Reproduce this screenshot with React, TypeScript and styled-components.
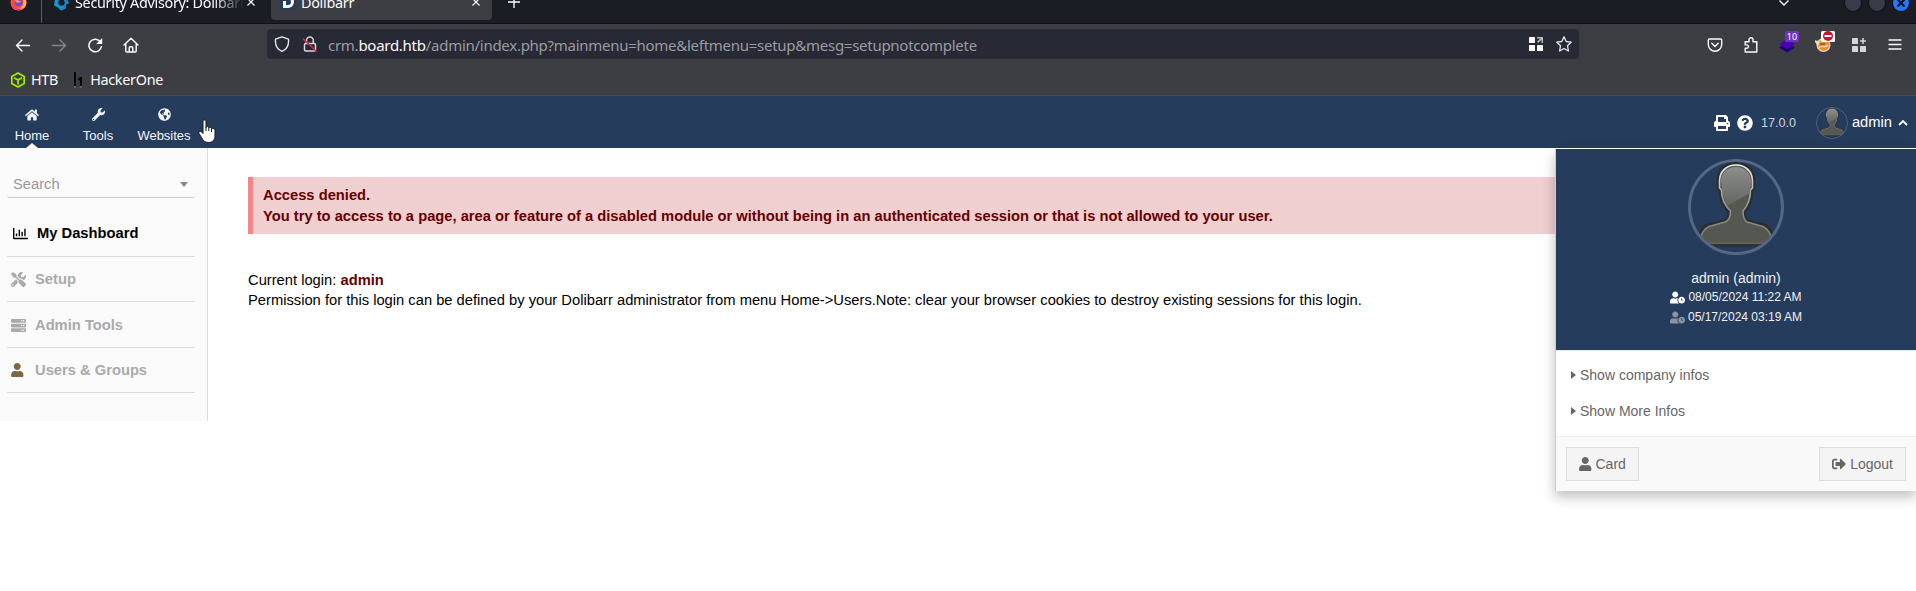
import React from 'react';
import styled, { createGlobalStyle } from 'styled-components';
import {
  FaHome, FaWrench, FaGlobeAmericas, FaPrint, FaQuestionCircle, FaRegChartBar,
  FaTools, FaServer, FaUser, FaUserClock, FaSignOutAlt,
} from 'react-icons/fa';

const Global = createGlobalStyle`
  * { box-sizing: border-box; }
  body { margin: 0; background: #fff; overflow: hidden; font-family: "Liberation Sans", Arial, sans-serif; }
  svg { display: block; flex: none; }
`;

/* ---------- browser chrome ---------- */
const Screen = styled.div`
  width: 1916px;
  height: 591px;
  overflow: hidden;
  background: #fff;
`;
const Chrome = styled.div`
  height: 96px;
  background: #3d3e43;
  border-bottom: 1px solid #4b4c52;
  font-family: "Noto Sans", sans-serif;
  color: #fbfbfe;
`;
const TabStrip = styled.div`
  height: 24px;
  background: #1b1d25;
  border-bottom: 1px solid #101116;
  display: flex;
  align-items: flex-end;
  overflow: hidden;
`;
const PinnedTab = styled.div`
  width: 42px;
  height: 44px;
  flex: none;
  margin-bottom: -1px;
  border-right: 1px solid #5a5b62;
  display: flex;
  align-items: center;
  padding-left: 10px;
`;
const Tab = styled.div<{ $active?: boolean; $width: number }>`
  width: ${p => p.$width}px;
  height: 36px;
  flex: none;
  margin: 0 4px 3px 0;
  padding: 0 12px 0 9px;
  border-radius: 4px;
  background: ${p => (p.$active ? '#3d3e43' : 'transparent')};
  display: flex;
  align-items: center;
`;
const TabTitle = styled.span<{ $fade?: boolean }>`
  flex: 1;
  margin: 1px 0 0 5px;
  font-size: 14.4px;
  letter-spacing: -0.3px;
  line-height: 20px;
  white-space: nowrap;
  overflow: hidden;
  ${p => p.$fade && 'margin-right: 3px; mask-image: linear-gradient(to right, #000 82%, transparent 100%);'}
`;
const StripSpacer = styled.div`flex: 1;`;
const NewTab = styled.div`
  height: 42px;
  display: flex;
  align-items: center;
  margin-left: 12px;
`;
const WindowButtons = styled.div`
  display: flex;
  gap: 8px;
  margin: 0 7px 12px 56px;
`;
const WindowButton = styled.div<{ $close?: boolean }>`
  width: 16px;
  height: 16px;
  border-radius: 50%;
  background: ${p => (p.$close ? '#2777ff' : '#3a3b48')};
  box-shadow: 0 0 0 1px #101116;
  display: flex;
  align-items: center;
  justify-content: center;
`;
const NavBar = styled.div`
  height: 40px;
  display: flex;
  align-items: center;
  padding: 0 13px 0 15px;
`;
const NavButtons = styled.div`
  display: flex;
  align-items: center;
  gap: 20px;
  width: 252px;
  padding-top: 1px;
`;
const UrlBar = styled.div`
  width: 1312px;
  height: 30px;
  background: #272934;
  border-radius: 4px;
  display: flex;
  align-items: center;
  padding: 0 7px;
`;
const Url = styled.div`
  flex: 1;
  margin: 1px 0 0 10px;
  font-size: 15px;
  letter-spacing: -0.27px;
  line-height: 22px;
  color: #9b9ca3;
  white-space: nowrap;
  b { font-weight: 400; color: #fbfbfe; }
`;
const UrlActions = styled.div`
  display: flex;
  align-items: center;
  gap: 12px;
`;
const Extensions = styled.div`
  margin-left: auto;
  display: flex;
  align-items: center;
  gap: 20px;
  padding-top: 1px;
`;
const Extension = styled.div`
  position: relative;
  width: 16px;
  height: 16px;
`;
const CountBadge = styled.span`
  position: absolute;
  left: 6px;
  top: -6px;
  width: 14px;
  height: 11px;
  border-radius: 1.5px;
  background: #6f35bf;
  font-size: 9px;
  line-height: 11px;
  text-align: center;
`;
const BlockBadge = styled.span`
  position: absolute;
  left: 6px;
  top: -6px;
  width: 14px;
  height: 11px;
  border-radius: 1.5px;
  background: #fff;
  display: flex;
  justify-content: center;
  align-items: center;
`;
const Bookmarks = styled.div`
  height: 31px;
  display: flex;
  align-items: center;
  padding-left: 10px;
  font-size: 14.4px;
  letter-spacing: -0.3px;
`;
const Bookmark = styled.div<{ $gap: number }>`
  display: flex;
  align-items: center;
  gap: ${p => p.$gap}px;
  margin-right: 16px;
`;

/* ---------- application ---------- */
const TopBar = styled.header`
  height: 52px;
  background: #263c5c;
  color: #fff;
  display: flex;
  position: relative;
`;
const MenuItem = styled.div<{ $width: number }>`
  width: ${p => p.$width}px;
  height: 52px;
  padding-top: 12px;
  display: flex;
  flex-direction: column;
  align-items: center;
  font-size: 13px;
  line-height: 15px;
  position: relative;
  color: #f2f4f7;
  span { margin-top: auto; margin-bottom: 5px; }
`;
const ActiveMark = styled.i`
  position: absolute;
  bottom: 0;
  left: 50%;
  margin-left: -6px;
  border: 6px solid transparent;
  border-top: 0;
  border-bottom: 5px solid #fafafa;
`;
const Cursor = styled.svg`
  position: absolute;
  left: 198px;
  top: 23px;
`;
const UserTools = styled.div`
  margin-left: auto;
  display: flex;
  align-items: center;
  height: 52px;
  padding: 1px 8px 0 0;
`;
const Version = styled.span`
  font-size: 12.6px;
  color: #d1d6dd;
  margin: 0 20px 0 8px;
`;
const UserName = styled.span`
  font-size: 14.72px;
  margin: -1px 6px 0 4px;
`;
const Body = styled.div`
  display: flex;
  align-items: flex-start;
`;
const Sidebar = styled.aside`
  width: 208px;
  height: 273px;
  background: #fafafa;
  border-right: 1px solid #dcdcdc;
  padding: 17px 12px 0 7px;
`;
const SearchBox = styled.div`
  height: 33px;
  border-bottom: 1px solid #ccc;
  border-radius: 3px;
  padding: 6px 7px 0 6px;
  display: flex;
  align-items: center;
  justify-content: space-between;
  font-size: 14.72px;
  color: #999;
`;
const Caret = styled.i`
  border: 4px solid transparent;
  border-top: 5px solid #888;
  border-bottom: 0;
`;
const SideItem = styled.div<{ $height: number; $active?: boolean; $pad: number }>`
  height: ${p => p.$height}px;
  border-bottom: 1px solid #dcdcdc;
  padding: 0 0 ${p => p.$pad}px ${p => (p.$active ? 6 : 4)}px;
  display: flex;
  align-items: flex-end;
  font-size: 14.72px;
  line-height: 17px;
  font-weight: 700;
  color: ${p => (p.$active ? '#000' : '#aaa')};
`;
const SideIcon = styled.span<{ $color?: string }>`
  width: 24px;
  height: 17px;
  display: flex;
  align-items: center;
  padding-bottom: 1px;
  color: ${p => p.$color || 'inherit'};
`;
const Main = styled.main`
  flex: 1;
  padding: 29px 30px 0 40px;
  font-size: 14.72px;
  color: #000;
`;
const ErrorBox = styled.div`
  height: 57px;
  border-left: 5px solid #f28787;
  background: #efcfcf;
  color: #600;
  font-weight: 700;
  line-height: 21px;
  padding: 8px 10px 7px 10px;
  white-space: nowrap;
`;
const LoginInfo = styled.div`
  margin-top: 36px;
  line-height: 20px;
  white-space: nowrap;
  b { color: #600; }
`;
const Dropdown = styled.section`
  position: absolute;
  right: 0;
  top: 52px;
  width: 361px;
  height: 343px;
  border-top: 1px solid #fff;
  border-left: 1px solid #ccc;
  background: #fff;
  box-shadow: 0 6px 12px rgba(0, 0, 0, 0.25);
`;
const UserHeader = styled.div`
  height: 201px;
  background: #263c5c;
  padding-top: 10px;
  display: flex;
  flex-direction: column;
  align-items: center;
`;
const FullName = styled.div`
  margin-top: 14px;
  font-size: 14px;
  line-height: 18px;
  color: #f0f2f5;
`;
const LoginDate = styled.div<{ $dim?: boolean }>`
  height: 20px;
  display: flex;
  align-items: center;
  gap: 3px;
  font-size: 12px;
  line-height: 20px;
  color: #f0f2f5;
  svg { color: #fff; opacity: ${p => (p.$dim ? 0.45 : 1)}; }
`;
const InfoLinks = styled.div`
  height: 86px;
  padding: 6px 0 0 15px;
  border-top: 1px solid #eee;
`;
const InfoLink = styled.div`
  height: 36px;
  display: flex;
  align-items: center;
  gap: 4px;
  font-size: 14px;
  color: #666;
  i { border: 4.5px solid transparent; border-left: 5px solid #666; border-right: 0; }
`;
const Footer = styled.div`
  height: 55px;
  border-top: 1px solid #eee;
  background: #f9f9f9;
  padding: 10px 10px 9px;
  display: flex;
  justify-content: space-between;
`;
const FooterButton = styled.div`
  height: 34px;
  border: 1px solid #ddd;
  background: #f4f4f4;
  padding: 0 12px;
  display: flex;
  align-items: center;
  gap: 4px;
  font-size: 14px;
  color: #666;
`;
const UserGlyph = styled(FaUser)`
  width: 12.5px;
  height: 14px;
`;
/* Crosses out the padlock for an insecure connection. */
const Padlock = styled.svg`
  margin-left: 12px;
`;
const HelpIcon = styled(FaQuestionCircle)`
  margin-left: 7px;
`;

const CloseX = () => (
  <svg width="8" height="8" viewBox="0 0 8 8" stroke="#fbfbfe" strokeWidth="1.2"><path d="M.5.5l7 7M7.5.5l-7 7" /></svg>
);

const Avatar = ({ size, ring }: { size: number; ring: number }) => (
  <svg width={size} height={size} viewBox="0 0 96 96">
    <defs>
      <clipPath id={`round${size}`}><circle cx="48" cy="48" r="46" /></clipPath>
      <linearGradient id={`head${size}`} x1="0" y1="0" x2="0" y2="1">
        <stop offset="0" stopColor="#8b8e8b" /><stop offset="1" stopColor="#626562" />
      </linearGradient>
      <linearGradient id={`edge${size}`} x1="0" y1="0" x2="0" y2="1">
        <stop offset="0" stopColor="#f2f2f2" /><stop offset=".45" stopColor="#999b98" /><stop offset="1" stopColor="#747672" />
      </linearGradient>
    </defs>
    <g clipPath={`url(#round${size})`}>
      <path d="M48 4.500C36 4.500 30 12 30 22L30 30L32 32C32 41 36 48 41 53C41 58 39 61 36 62L20 66C13 69 11 75 10 86L86 86C85 75 83 69 76 66L60 62C57 60 56 57 56 53C61 48 64 41 64 32L66 30L66 22C66 12 60 4.500 48 4.500Z" fill="#555751" stroke="#2b2d2e" strokeWidth="3" />
      <path d="M48 6C38 6 31.500 13 31.500 22L31.500 29L33.500 31C33.500 40 37 47 42.500 52C42.500 58 40 62 37 63L21 67.500C15 70 13 75 12 84.500L84 84.500C83 75 81 70 75 67.500L59 63C56 61 55 58 55 52C59.500 47 62.500 40 62.500 31L64.500 29L64.500 22C64.500 13 58 6 48 6Z" fill="#555751" stroke={`url(#edge${size})`} strokeWidth="1.600" />
      <path d="M48 8C39 8 33 14 33 22L34.500 31C35 37 36.500 42 39 47L62 34L63 22C63 14 57 8 48 8Z" fill={`url(#head${size})`} />
      <path d="M10 86h76" stroke="#303236" strokeWidth="2.500" />
    </g>
    <circle cx="48" cy="48" r={48 - ring / 2} fill="none" stroke="#546783" strokeWidth={ring} />
  </svg>
);

const BrowserTabs = () => (
  <TabStrip>
    <PinnedTab>
      <svg width="17" height="17" viewBox="0 0 17 17">
        <circle cx="8.500" cy="8.500" r="8" fill="#ff4b3a" />
        <path d="M11 0C16 3 17.500 8 15.500 12C13 17 5 18 2 13C5 16 11 15 13 11C14 8 13 4 11 0Z" fill="#ffbd3d" />
        <path d="M1 11C3 17 11 18 14.500 13.500C11 16 5 15 1 11Z" fill="#f52f76" />
        <circle cx="8.500" cy="8.300" r="3.900" fill="#7942e8" />
        <path d="M4 5C7 5 8 7 11 7C10 9 7 9 6 8Z" fill="#ff9c3c" />
      </svg>
    </PinnedTab>
    <Tab $width={225}>
      <svg width="19" height="19" viewBox="0 0 19 19">
        <path d="M10 1.500L15 4.500L18 10L15 11.500L14.500 15.500L10 17.500L7 14.500L3 12.500L4 6Z" fill="#1498d5" />
        <path d="M15 4.500L18 10L15 11.500L14.500 15.500L10 17.500L13 12Z" fill="#1784c8" />
        <circle cx="10.500" cy="9.500" r="3.200" fill="#1b1d25" />
      </svg>
      <TabTitle $fade>Security Advisory: Dolibarr</TabTitle>
      <CloseX />
    </Tab>
    <Tab $active $width={221}>
      <svg width="16" height="16" viewBox="0 0 16 16">
        <rect width="16" height="16" fill="#263c5c" />
        <path d="M3 2h5a6 6 0 0 1 0 12H3V7h3v4h2a3 3 0 0 0 0-6H3Z" fill="#fff" />
      </svg>
      <TabTitle>Dolibarr</TabTitle>
      <CloseX />
    </Tab>
    <NewTab>
      <svg width="12" height="12" viewBox="0 0 12 12" stroke="#fbfbfe" strokeWidth="1.400"><path d="M6 0v12M0 6h12" /></svg>
    </NewTab>
    <StripSpacer />
    <NewTab>
      <svg width="10" height="7" viewBox="0 0 10 7" fill="none" stroke="#fbfbfe" strokeWidth="1.400"><path d="M.5 1.500L5 6l4.500-4.500" /></svg>
    </NewTab>
    <WindowButtons>
      <WindowButton />
      <WindowButton />
      <WindowButton $close>
        <svg width="8" height="8" viewBox="0 0 8 8" stroke="#15171e" strokeWidth="2.200"><path d="M.5.5l7 7M7.500.5l-7 7" /></svg>
      </WindowButton>
    </WindowButtons>
  </TabStrip>
);

const BrowserToolbar = () => (
  <NavBar>
    <NavButtons>
      <svg width="16" height="16" viewBox="0 0 16 16" fill="none" stroke="#fbfbfe" strokeWidth="1.400" strokeLinecap="round" strokeLinejoin="round"><path d="M14.500 8.500H1.500M7 3L1.500 8.500L7 14" /></svg>
      <svg width="16" height="16" viewBox="0 0 16 16" fill="none" stroke="#85868b" strokeWidth="1.400" strokeLinecap="round" strokeLinejoin="round"><path d="M1.500 8.500h13M9 3l5.500 5.500L9 14" /></svg>
      <svg width="16" height="16" viewBox="0 0 16 16" fill="none" stroke="#fbfbfe" strokeWidth="1.500"><path d="M13.500 5A6.300 6.300 0 1 0 14.500 9" /><path d="M15.200 1v6h-6Z" fill="#fbfbfe" stroke="none" /></svg>
      <svg width="16" height="16" viewBox="0 0 16 16" fill="none" stroke="#fbfbfe" strokeWidth="1.400" strokeLinejoin="round" strokeLinecap="round"><path d="M1 8L8 1.200L15 8M2.800 7v7a1 1 0 0 0 1 1h8.400a1 1 0 0 0 1-1V7M6.200 15v-4.200a1 1 0 0 1 1-1h1.600a1 1 0 0 1 1 1V15" /></svg>
    </NavButtons>
    <UrlBar>
      <svg width="16" height="16" viewBox="0 0 16 16" fill="none" stroke="#e5e5ea" strokeWidth="1.400" strokeLinejoin="round"><path d="M8 .8L14.500 3.200C15 9 12.500 13.500 8 15.300C3.500 13.500 1 9 1.500 3.200Z" /></svg>
      <Padlock width="16" height="16" viewBox="0 0 16 16" fill="none" stroke="#d5d6dc" strokeWidth="1.500">
        <path d="M4.500 7V4.500a3.400 3.400 0 0 1 6.800 0V7" />
        <rect x="2.500" y="7.500" width="11" height="7.500" rx="1.200" />
        <path d="M1 2.500L14.500 15.500" stroke="#e22850" strokeWidth="1.500" />
      </Padlock>
      <Url>crm.<b>board.htb</b>/admin/index.php?mainmenu=home&amp;leftmenu=setup&amp;mesg=setupnotcomplete</Url>
      <UrlActions>
        <svg width="16" height="16" viewBox="0 0 16 16" fill="#fbfbfe">
          <rect x="1" y="1" width="6" height="6" rx=".6" /><rect x="1" y="9" width="6" height="6" rx=".6" /><rect x="9" y="9" width="6" height="6" rx=".6" />
          <path d="M9 1h6v6h-1.500V3.700L10.200 7L9 5.800L12.300 2.500H9Z" fill="#b9bac0" />
        </svg>
        <svg width="16" height="16" viewBox="0 0 16 16" fill="none" stroke="#e5e5ea" strokeWidth="1.300" strokeLinejoin="round"><path d="M8 .8l2.200 4.700 5 .7-3.700 3.500.9 5.300L8 12.500 3.600 15l.9-5.300L.8 6.200l5-.7Z" /></svg>
      </UrlActions>
    </UrlBar>
    <Extensions>
      <svg width="16" height="16" viewBox="0 0 16 16" fill="none" stroke="#fbfbfe" strokeWidth="1.400" strokeLinecap="round" strokeLinejoin="round"><path d="M2.500 2h11a1.200 1.200 0 0 1 1.200 1.200V7.500a6.700 6.700 0 0 1-13.400 0V3.200A1.200 1.200 0 0 1 2.500 2ZM4.800 6.300L8 9.400l3.200-3.100" /></svg>
      <svg width="16" height="16" viewBox="0 0 16 16" fill="none" stroke="#fbfbfe" strokeWidth="1.400" strokeLinejoin="round"><path d="M2.200 4.700H6V2.800a2 2 0 0 1 4 0V4.700h3.800V15H2.200v-3.700h1.600a1.700 1.700 0 0 0 0-3.400H2.200Z" /></svg>
      <Extension>
        <svg width="16" height="16" viewBox="0 0 16 16"><path d="M0 10.500L8 6l8 4.500L8 15.500Z" fill="#200070" /><path d="M0 7L8 2l8 5-8 5Z" fill="#4b00b5" /></svg>
        <CountBadge>10</CountBadge>
      </Extension>
      <Extension>
        <svg width="16" height="16" viewBox="0 0 16 16"><circle cx="8.500" cy="8" r="7" fill="#e8d9c4" /><circle cx="8.500" cy="8" r="5.800" fill="#f08b2c" /><path d="M0 4l4 1-1 3ZM4 11c3-4 6 1 9-3" fill="none" stroke="#f6ddb5" strokeWidth="1.300" /><path d="M5 7h5" stroke="#653415" strokeWidth="1" /></svg>
        <BlockBadge><svg width="10" height="10" viewBox="0 0 10 10"><circle cx="5" cy="5" r="5" fill="#c8142f" /><rect x="1.500" y="4" width="7" height="2" fill="#fff" /></svg></BlockBadge>
      </Extension>
      <svg width="16" height="16" viewBox="0 0 16 16" fill="#d6d6da">
        <rect x="1" y="1" width="6" height="6" rx=".6" /><rect x="1" y="9" width="6" height="6" rx=".6" /><rect x="9" y="9" width="6" height="6" rx=".6" />
        <path d="M11.300 1h1.500v2.300H15v1.500h-2.200V7h-1.500V4.800H9V3.300h2.300Z" />
      </svg>
      <svg width="16" height="16" viewBox="0 0 16 16" stroke="#fbfbfe" strokeWidth="1.300" strokeLinecap="round"><path d="M2 3h12M2 7.500h12M2 12h12" /></svg>
    </Extensions>
  </NavBar>
);

const BookmarkBar = () => (
  <Bookmarks>
    <Bookmark $gap={5}>
      <svg width="16" height="16" viewBox="0 0 16 16" fill="none" stroke="#9fef00" strokeWidth="1.700" strokeLinejoin="round"><path d="M8 1l6.200 3.400v7.200L8 15l-6.200-3.400V4.400ZM4 5.800L8 8l4-2.200M8 8v4.500" /></svg>
      HTB
    </Bookmark>
    <Bookmark $gap={8}>
      <svg width="8" height="16" viewBox="0 0 8 16"><path d="M0 0h2v14H0ZM4 6.500L6 5h2v9H5.800V8L4 8.500Z" fill="#050505" /><path d="M0 14.500h2v1H0ZM5.800 14.500H8v1H5.800Z" fill="#88898d" /></svg>
      HackerOne
    </Bookmark>
  </Bookmarks>
);

const UserPanel = () => (
  <Dropdown>
    <UserHeader>
      <Avatar size={96} ring={3} />
      <FullName>admin (admin)</FullName>
      <LoginDate><FaUserClock size={15} />08/05/2024 11:22 AM</LoginDate>
      <LoginDate $dim><FaUserClock size={15} />05/17/2024 03:19 AM</LoginDate>
    </UserHeader>
    <InfoLinks>
      <InfoLink><i />Show company infos</InfoLink>
      <InfoLink><i />Show More Infos</InfoLink>
    </InfoLinks>
    <Footer>
      <FooterButton><UserGlyph />Card</FooterButton>
      <FooterButton><FaSignOutAlt size={14} />Logout</FooterButton>
    </Footer>
  </Dropdown>
);

export default function App() {
  return (
    <Screen>
      <Global />
      <Chrome>
        <BrowserTabs />
        <BrowserToolbar />
        <BookmarkBar />
      </Chrome>
      <TopBar>
        <MenuItem $width={64}><FaHome size={14} /><span>Home</span><ActiveMark /></MenuItem>
        <MenuItem $width={68}><FaWrench size={13} /><span>Tools</span></MenuItem>
        <MenuItem $width={64}><FaGlobeAmericas size={13} /><span>Websites</span></MenuItem>
        <Cursor width="18" height="25" viewBox="0 0 18 25">
          <path d="M5 2.500C5 .5 8 .5 8 2.500V8.500C8.500 7 10.500 7.200 10.800 8.800C11.500 7.800 13.200 8.200 13.500 9.700C14.500 9 17 9.500 17 11.500V17C17 21 14.500 23.500 10.500 23.500C6.500 23.500 5.200 21.500 3.500 18.500L1 14.500C.2 12.700 2.500 11.800 3.700 13L5 14.500Z" fill="#fff" stroke="#151a22" strokeWidth="1" />
          <path d="M8 8v4M10.800 8.500V12M13.500 9.500V13" stroke="#151a22" strokeWidth="1" />
        </Cursor>
        <UserTools>
          <FaPrint size={16} />
          <HelpIcon size={16} />
          <Version>17.0.0</Version>
          <Avatar size={32} ring={2.5} />
          <UserName>admin</UserName>
          <svg width="10" height="6" viewBox="0 0 10 6" fill="none" stroke="#fff" strokeWidth="1.800"><path d="M1 5l4-4 4 4" /></svg>
        </UserTools>
        <UserPanel />
      </TopBar>
      <Body>
        <Sidebar>
          <SearchBox>Search<Caret /></SearchBox>
          <SideItem $height={59} $pad={14} $active><SideIcon><FaRegChartBar size={15} /></SideIcon>My Dashboard</SideItem>
          <SideItem $height={45} $pad={13}><SideIcon><FaTools size={15} /></SideIcon>Setup</SideItem>
          <SideItem $height={46} $pad={13}><SideIcon><FaServer size={15} /></SideIcon>Admin Tools</SideItem>
          <SideItem $height={45} $pad={13}><SideIcon $color="#7d6740"><UserGlyph /></SideIcon>Users &amp; Groups</SideItem>
        </Sidebar>
        <Main>
          <ErrorBox>
            Access denied.<br />
            You try to access to a page, area or feature of a disabled module or without being in an authenticated session or that is not allowed to your user.
          </ErrorBox>
          <LoginInfo>
            Current login: <b>admin</b><br />
            Permission for this login can be defined by your Dolibarr administrator from menu Home-&gt;Users.Note: clear your browser cookies to destroy existing sessions for this login.
          </LoginInfo>
        </Main>
      </Body>
    </Screen>
  );
}
